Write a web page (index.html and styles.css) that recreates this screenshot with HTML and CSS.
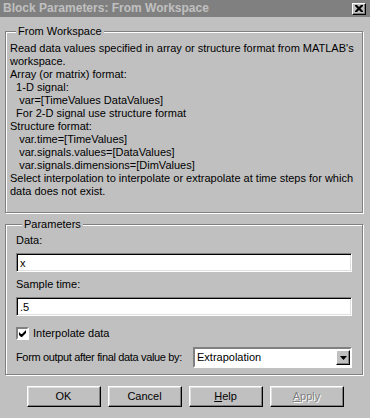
FILE: index.html
```html
<!DOCTYPE html>
<html><head>
<meta charset="UTF-8">
<title>Block Parameters: From Workspace</title>
<link rel="stylesheet" href="styles.css">
</head>
<body>

<div class="titlebar">
  <span class="caption">Block Parameters: From Workspace</span>
  <span class="closebtn"><svg width="8" height="7" viewBox="0 0 8 7"><path d="M0 0h2l2 2l2-2h2v1l-2.5 2.5l2.5 2.5v1h-2l-2-2l-2 2h-2v-1l2.5-2.5l-2.5-2.5z" fill="#000"/></svg></span>
</div>

<fieldset class="group desc">
  <legend>From Workspace</legend>
<div class="text">Read data values specified in array or structure format from MATLAB's
workspace.
Array (or matrix) format:
  1-D signal:
   var=[TimeValues DataValues]
  For 2-D signal use structure format
Structure format:
   var.time=[TimeValues]
   var.signals.values=[DataValues]
   var.signals.dimensions=[DimValues]
Select interpolation to interpolate or extrapolate at time steps for which
data does not exist.</div>
</fieldset>

<fieldset class="group params">
  <legend>Parameters</legend>
  <div class="label">Data:</div>
  <div class="edit">x</div>
  <div class="label">Sample time:</div>
  <div class="edit">.5</div>
  <div class="checkrow">
    <span class="checkbox"><svg width="7" height="7" viewBox="0 0 7 7"><path d="M0 2v3l2 2h1l4-4v-3l-4 4h-1z" fill="#000"/></svg></span>
    <span>Interpolate data</span>
  </div>
  <div class="comborow">
    <span class="combolabel">Form output after final data value by:</span>
    <div class="combo">
      <span class="combotext">Extrapolation</span>
      <span class="dropbtn"><svg width="7" height="4" viewBox="0 0 7 4"><path d="M0 0h7l-3.5 4z" fill="#000"/></svg></span>
    </div>
  </div>
</fieldset>

<div class="buttons">
  <div class="button">OK</div>
  <div class="button">Cancel</div>
  <div class="button"><u>H</u>elp</div>
  <div class="button disabled"><u>A</u>pply</div>
</div>

</body></html>
```

FILE: styles.css
```css
html, body {
	margin: 0;
	padding: 0;
}

body {
	width: 370px;
	height: 418px;
	overflow: hidden;
	background: #c0c0c0;
	color: #000;
	font-family: "Liberation Sans", Arial, sans-serif;
	font-size: 11px;
	line-height: 13px;
}

/* caption bar (inactive) */
.titlebar {
	height: 17px;
	background: #808080;
	display: flex;
	align-items: center;
	justify-content: space-between;
	padding: 0 4px 0 3px;
}

.caption {
	color: #c0c0c0;
	font-weight: bold;
	font-size: 12px;
}

.closebtn {
	width: 12px;
	height: 10px;
	background: #c0c0c0;
	border-top: 1px solid #fff;
	border-left: 1px solid #fff;
	border-right: 1px solid #000;
	border-bottom: 1px solid #000;
	box-shadow: inset -1px -1px 0 #808080;
	display: flex;
	align-items: center;
	justify-content: center;
}

/* etched group boxes */
.group {
	margin: 8px 7px 0 5px;
	padding: 0 4px;
	border: 1px solid #808080;
	box-shadow: inset 1px 1px 0 #fff, 1px 1px 0 #fff;
	min-width: 0;
}

.group legend {
	margin-left: 6px;
	padding: 0 2px;
	background: #c0c0c0;
	line-height: 13px;
}

.desc {
	padding-top: 4px;
	padding-bottom: 14px;
}

.desc .text {
	white-space: pre;
}

.params {
	margin-top: 5px;
	padding: 3px 10px 6px 10px;
}

.label {
	height: 13px;
}

.edit {
	height: 17px;
	margin: 6px 0 6px 0;
	padding: 0 3px;
	background: #fff;
	border-top: 1px solid #808080;
	border-left: 1px solid #808080;
	border-right: 1px solid #fff;
	border-bottom: 1px solid #fff;
	box-shadow: inset 1px 1px 0 #000, inset -1px -1px 0 #dfdfdf;
	line-height: 19px;
}

.checkrow {
	display: flex;
	align-items: center;
	gap: 4px;
	margin-top: 11px;
}

.checkbox {
	width: 9px;
	height: 9px;
	background: #fff;
	border-top: 2px solid #808080;
	border-left: 2px solid #808080;
	border-right: 2px solid #fff;
	border-bottom: 2px solid #fff;
	display: flex;
	align-items: center;
	justify-content: center;
}

.comborow {
	display: flex;
	align-items: center;
	justify-content: space-between;
	margin-top: 7px;
}

.combolabel {
	white-space: nowrap;
	letter-spacing: -0.35px;
}

.combo {
	flex: none;
	width: 155px;
	height: 17px;
	background: #fff;
	border-top: 2px solid #808080;
	border-left: 2px solid #808080;
	border-right: 2px solid #fff;
	border-bottom: 2px solid #fff;
	display: flex;
	align-items: center;
	justify-content: space-between;
}

.combotext {
	padding-left: 2px;
}

.dropbtn {
	width: 12px;
	height: 13px;
	background: #c0c0c0;
	border-top: 1px solid #fff;
	border-left: 1px solid #fff;
	border-right: 1px solid #000;
	border-bottom: 1px solid #000;
	box-shadow: inset -1px -1px 0 #808080;
	display: flex;
	align-items: center;
	justify-content: center;
}

/* dialog buttons */
.buttons {
	display: flex;
	justify-content: center;
	gap: 7px;
	margin-top: 11px;
}

.button {
	width: 70px;
	height: 17px;
	border-top: 1px solid #fff;
	border-left: 1px solid #fff;
	border-right: 1px solid #000;
	border-bottom: 1px solid #000;
	box-shadow: inset -1px -1px 0 #808080, inset 1px 1px 0 #dfdfdf;
	padding: 1px;
	text-align: center;
	line-height: 17px;
}

.button u {
	text-decoration: underline;
}

.disabled {
	color: #808080;
	text-shadow: 1px 1px 0 #fff;
}
```
